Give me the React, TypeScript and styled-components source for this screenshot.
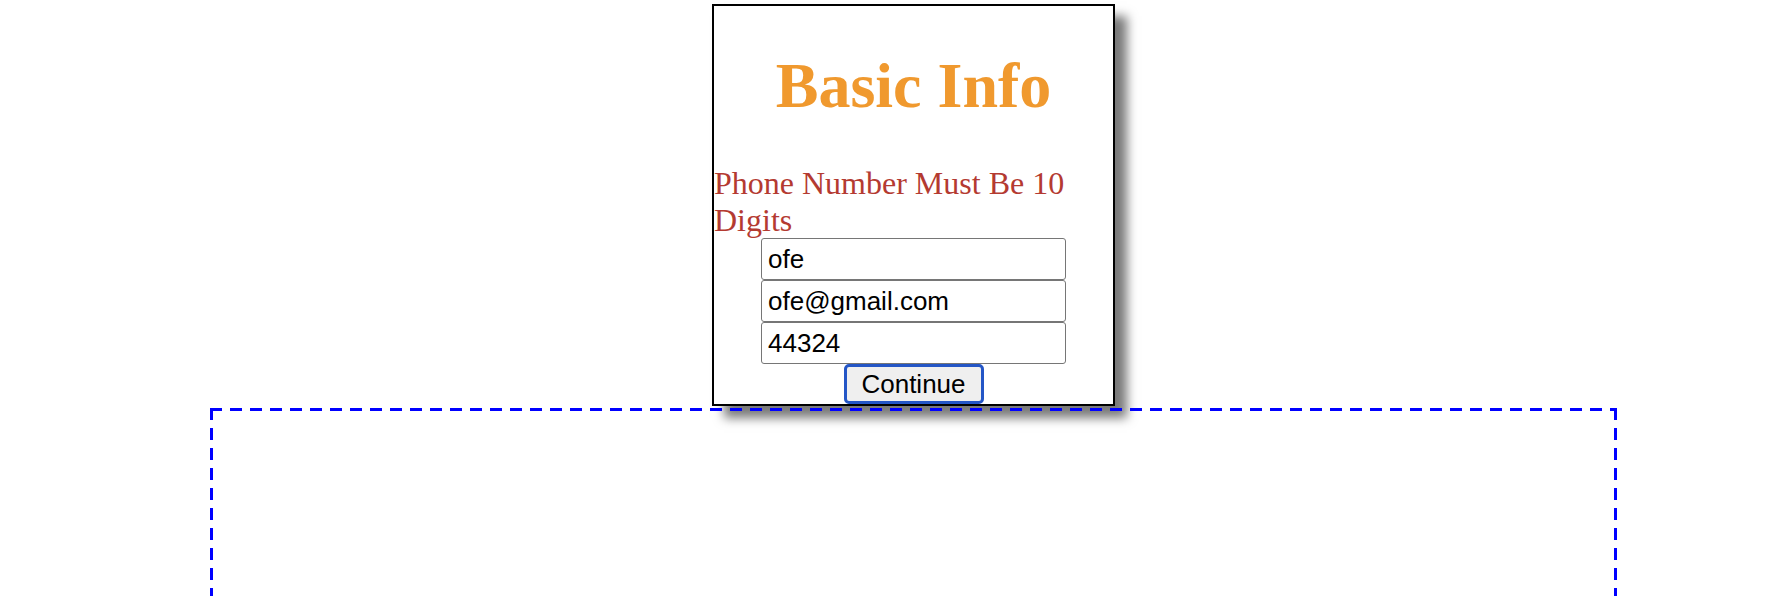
import styled, { createGlobalStyle } from "styled-components"

const GlobalStyle = createGlobalStyle`
  body {
    margin: 0;
    background: #fff;
    font-family: "Liberation Serif", "Times New Roman", serif;
  }
`

const Page = styled.div`
  padding-top: 4px;
`

const Column = styled.div`
  display: flex;
  flex-direction: column;
  align-items: center;
  width: 1407px;
  margin-left: 210px;
`

const Card = styled.div`
  width: 399px;
  border: 2px solid #000;
  background: #fff;
  box-shadow: 12px 12px 10px #7a7a7a;
  margin-bottom: 2px;
`

const Title = styled.h1`
  margin: 43px 0;
  font-size: 64px;
  line-height: 73px;
  font-weight: bold;
  text-align: center;
  color: #f0992e;
`

const ErrorText = styled.div`
  font-size: 32px;
  line-height: 36.5px;
  color: #b43a31;
`

const Form = styled.form`
  display: flex;
  flex-direction: column;
  align-items: center;
  margin: 0;
`

const Field = styled.input`
  box-sizing: border-box;
  width: 305px;
  height: 42px;
  margin: 0;
  padding: 0 6px;
  border: 1px solid #767676;
  border-radius: 3px;
  font-family: "Liberation Sans", Arial, sans-serif;
  font-size: 26px;
  color: #000;
  background: #fff;
  outline: none;
`

const Button = styled.button`
  box-sizing: border-box;
  width: 140px;
  height: 40px;
  margin: 0;
  padding: 0;
  border: 3px solid #2456c6;
  border-radius: 5px;
  background: #efefef;
  font-family: "Liberation Sans", Arial, sans-serif;
  font-size: 26px;
  color: #000;
`

// dashes 12px long with 8px gaps, like the reference's border
const dashH = "repeating-linear-gradient(90deg, #0000ff 0 12px, transparent 12px 20px)"
const dashV = "repeating-linear-gradient(180deg, #0000ff 0 12px, transparent 12px 20px)"

const DashedBox = styled.div`
  align-self: stretch;
  height: 400px;
  background:
    ${dashH} left top / 100% 3px no-repeat,
    ${dashH} left bottom / 100% 3px no-repeat,
    ${dashV} left top / 3px 100% no-repeat,
    ${dashV} right top / 3px 100% no-repeat;
`

export default function App() {
  return (
    <>
      <GlobalStyle />
      <Page>
        <Column>
          <Card>
            <Title>Basic Info</Title>
            <ErrorText>Phone Number Must Be 10 Digits</ErrorText>
            <Form onSubmit={(e) => e.preventDefault()}>
              <Field type="text" defaultValue="ofe" />
              <Field type="email" defaultValue="ofe@gmail.com" />
              <Field type="text" defaultValue="44324" />
              <Button type="submit">Continue</Button>
            </Form>
          </Card>
          <DashedBox />
        </Column>
      </Page>
    </>
  )
}
